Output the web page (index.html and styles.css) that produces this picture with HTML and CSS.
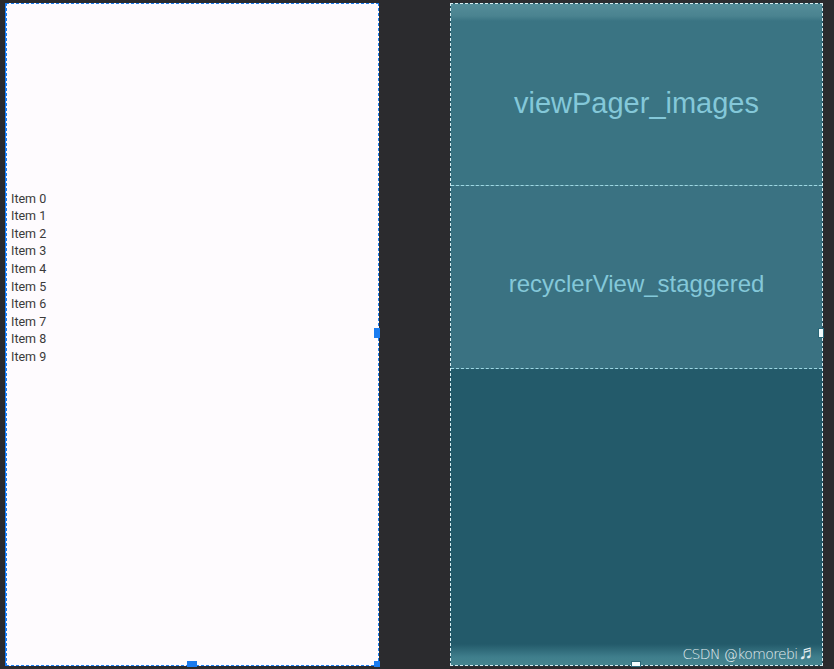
FILE: index.html
```html
<!DOCTYPE html>
<html>
<head>
<meta charset="utf-8">
<link rel="stylesheet" href="styles.css">
</head>
<body>
<div class="stage">
  <div class="phone light">
    <ul class="list">
      <li>Item 0</li><li>Item 1</li><li>Item 2</li><li>Item 3</li><li>Item 4</li>
      <li>Item 5</li><li>Item 6</li><li>Item 7</li><li>Item 8</li><li>Item 9</li>
    </ul>
    <span class="handle h-right blue"></span>
    <span class="handle h-bottom blue"></span>
    <span class="handle h-corner blue"></span>
  </div>
  <div class="phone dark">
    <div class="sec pager"><span class="lbl big">viewPager_images</span></div>
    <div class="sec recycler"><span class="lbl">recyclerView_staggered</span></div>
    <div class="sec rest"></div>
    <span class="handle h-right white"></span>
    <span class="handle h-bottom2 white"></span>
    <span class="wm">CSDN @komorebi<span class="note">&#9836;</span></span>
  </div>
</div>
</body>
</html>
```
FILE: styles.css
```css
html, body { margin: 0; padding: 0; }
body { background: #2b2b2e; width: 834px; height: 669px; overflow: hidden; font-family: Roboto, "Liberation Sans", sans-serif; }
.stage { display: flex; gap: 71px; padding: 3px 0 0 6px; }
.phone { position: relative; width: 373px; height: 663px; box-sizing: border-box; }
.light { background: #fefbfe; border: 1px dashed #1a7cf0; box-shadow: -1px 0 0 #1a7cf0; display: flex; flex-direction: column; justify-content: center; padding-bottom: 114px; }
.list { list-style: none; margin: 0; padding: 0 0 0 4px; font-size: 12.5px; color: #3a3a3a; }
.list li { height: 17.6px; line-height: 17.6px; }
.dark { border: 1px dashed #d7eef2; display: flex; flex-direction: column; background: #235a6a; }
.sec { display: flex; align-items: center; justify-content: center; }
.pager { height: 181px; background: linear-gradient(#558d99 0, #4a8390 12px, #3a7483 17px, #3a7483 100%); border-bottom: 1px dashed #9ed8e4; }
.recycler { height: 182px; background: #3a7282; border-bottom: 1px dashed #9ed8e4; }
.rest { flex: 1; background: linear-gradient(to bottom, #235a6a 0, #235a6a 275px, #3f7e8c 288px, #46858f 100%); }
.lbl { color: #84c8d9; font-family: "Liberation Sans", Arial, sans-serif; font-size: 24px; padding-top: 14px; }
.lbl.big { font-size: 29px; padding-top: 18px; }
.handle { position: absolute; width: 6px; height: 10px; }
.blue { background: #1a7cf0; }
.white { background: #f2fbfd; border: 1px solid #2a6777; box-sizing: border-box; }
.h-right { right: -2px; top: 324px; }
.h-bottom { width: 10px; height: 6px; left: 180px; bottom: -2px; }
.h-corner { width: 6px; height: 6px; right: -2px; bottom: -2px; }
.h-bottom2 { width: 10px; height: 6px; left: 180px; bottom: -2px; }
.wm { position: absolute; right: 4px; bottom: 3px; color: #e4eef0; font-size: 14px; font-family: "DejaVu Sans", sans-serif; font-weight: 300; letter-spacing: -0.6px; }
.note { font-size: 20px; line-height: 14px; margin-left: 1px; }
```
